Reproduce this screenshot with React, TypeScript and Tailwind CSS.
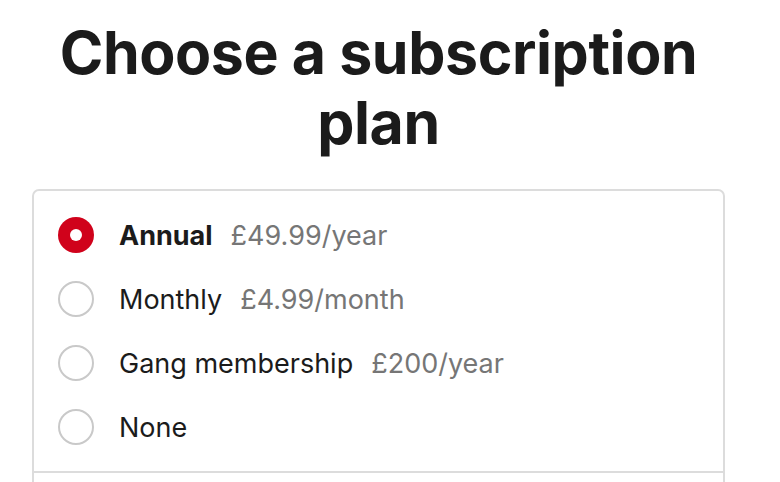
import { useState } from "react";

type Plan = {
  id: string;
  label: string;
  price?: string;
};

const plans: Plan[] = [
  { id: "annual", label: "Annual", price: "£49.99/year" },
  { id: "monthly", label: "Monthly", price: "£4.99/month" },
  { id: "gang", label: "Gang membership", price: "£200/year" },
  { id: "none", label: "None" },
];

const Radio = ({ checked }: { checked: boolean }) => {
  if (checked) {
    return (
      <span className="w-[36px] h-[36px] rounded-full bg-[#d0021b] flex items-center justify-center shrink-0">
        <span className="w-[12px] h-[12px] rounded-full bg-white" />
      </span>
    );
  }
  return <span className="w-[36px] h-[36px] rounded-full border-2 border-[#c9c9c9] bg-white shrink-0" />;
};

const App = () => {
  const [selected, setSelected] = useState("annual");

  return (
    <div className="w-[780px] h-[482px] overflow-hidden bg-white text-[#1b1b1b] font-['Inter','Liberation_Sans',sans-serif]">
      <h1 className="ml-[32px] w-[693px] pt-[18px] text-center text-[59px] leading-[70px] font-bold tracking-[-0.4px]">
        Choose a subscription plan
      </h1>
      <div className="ml-[32px] mt-[31px] w-[693px] border-2 border-[#dcdcdc] rounded-[7px]">
        <div className="pt-[12px] pb-[12px] border-b-2 border-[#dcdcdc]">
          {plans.map((plan) => (
            <label
              key={plan.id}
              className="h-[64px] flex items-center pl-[24px] cursor-pointer"
              onClick={() => setSelected(plan.id)}
            >
              <Radio checked={selected === plan.id} />
              <span
                className={
                  "ml-[25px] text-[27px] leading-[36px] pt-[2px] " +
                  (selected === plan.id ? "font-bold" : "font-normal")
                }
              >
                {plan.label}
              </span>
              {plan.price && (
                <span className="ml-[18px] text-[27px] leading-[36px] pt-[2px] text-[#767676]">{plan.price}</span>
              )}
            </label>
          ))}
        </div>
        <div className="h-[120px]" />
      </div>
    </div>
  );
};

export default App;
